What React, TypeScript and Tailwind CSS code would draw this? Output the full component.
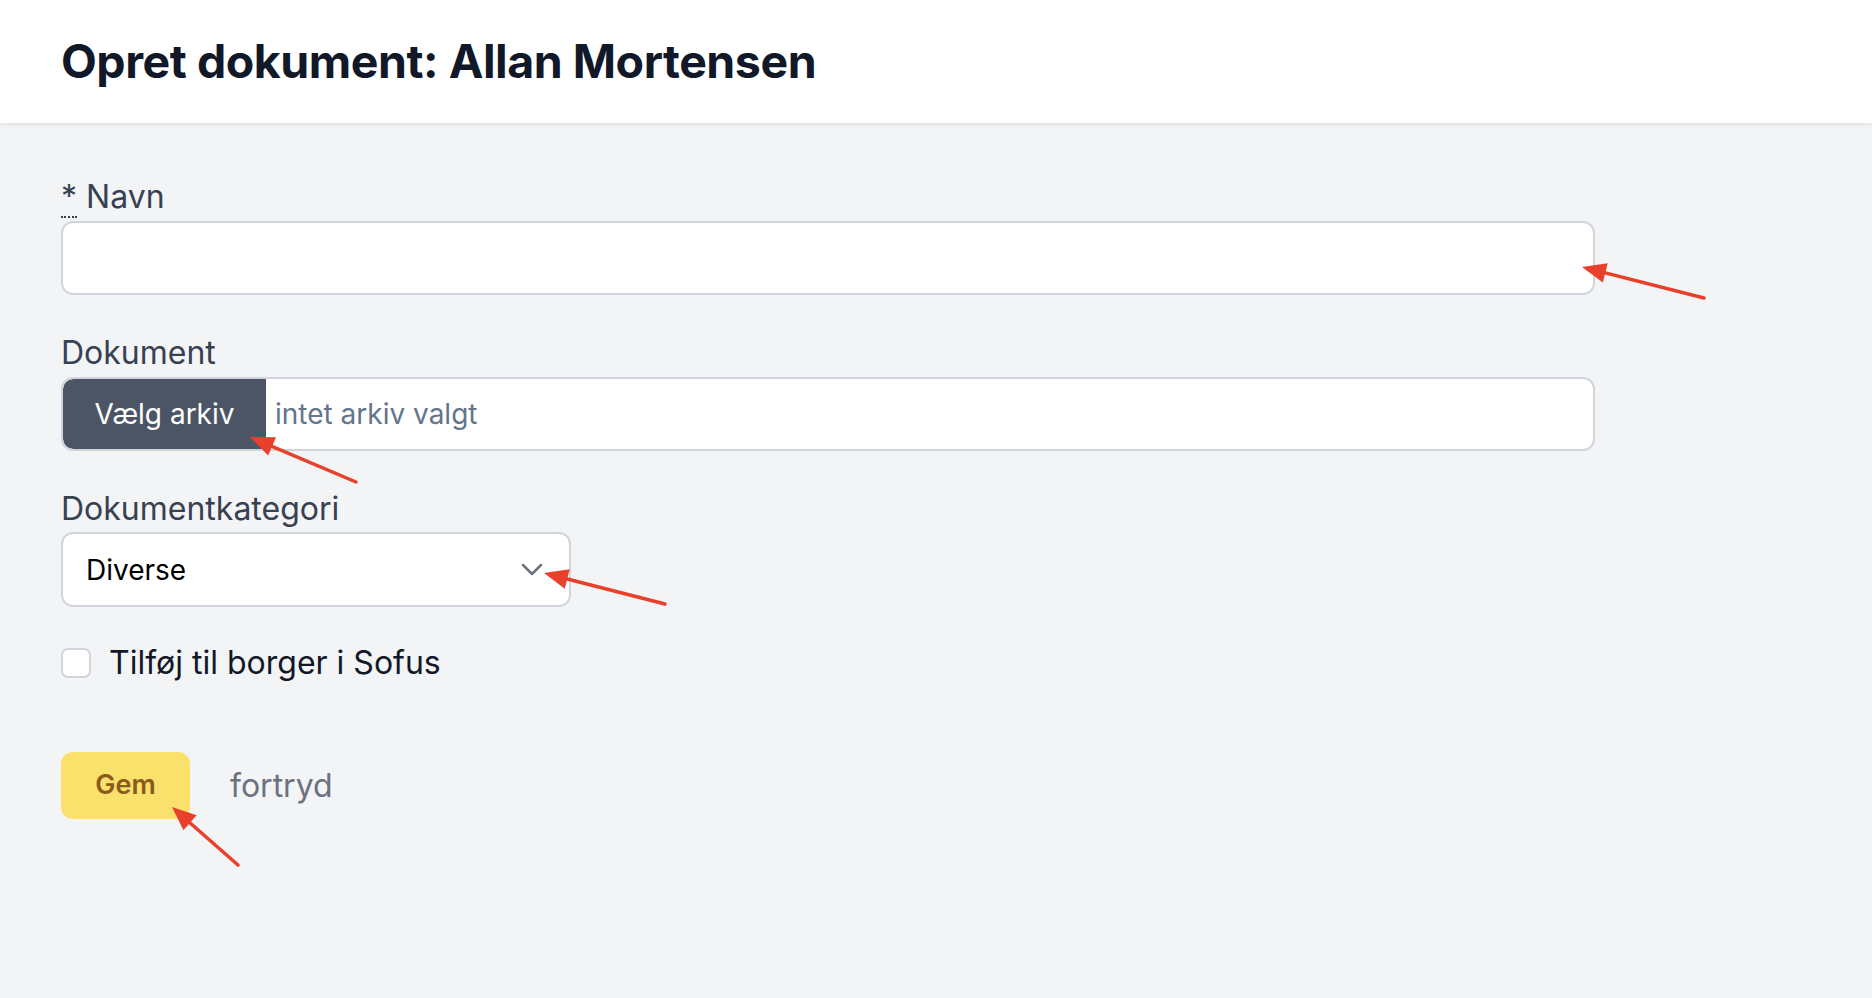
import React from "react"

const font = { fontFamily: "Inter, 'Noto Sans', sans-serif" }

// red annotation arrows drawn over the form
const arrows = [
  { from: [1704, 298], to: [1582, 267] },
  { from: [356, 482], to: [250, 437] },
  { from: [665, 604], to: [544, 573] },
  { from: [238, 865], to: [172, 807] },
]

function Arrow({ from, to }: { from: number[]; to: number[] }) {
  const dx = to[0] - from[0]
  const dy = to[1] - from[1]
  const len = Math.hypot(dx, dy)
  const ux = dx / len
  const uy = dy / len
  const L = 24
  const W = 10
  const bx = to[0] - ux * L
  const by = to[1] - uy * L
  const pts = `${to[0]},${to[1]} ${bx - uy * W},${by + ux * W} ${bx + uy * W},${by - ux * W}`
  return (
    <g>
      <line x1={from[0]} y1={from[1]} x2={bx + ux * 4} y2={by + uy * 4} stroke="#e8402a" strokeWidth={3.5} strokeLinecap="round" />
      <polygon points={pts} fill="#e8402a" />
    </g>
  )
}

export default function App() {
  return (
    <div className="relative min-h-[998px] bg-[#f3f4f6]" style={font}>
      {/* Header */}
      <header className="flex h-[123px] items-center bg-white px-[61px] shadow-[0_2px_4px_rgba(0,0,0,0.08)]">
        <h1 className="text-[46.5px] font-bold tracking-[-0.01em] text-[#111827]">Opret dokument: Allan Mortensen</h1>
      </header>

      {/* Form */}
      <main className="px-[61px] pt-[56px]">
        <div>
          <label className="mb-[6px] block text-[32px] leading-[36px] text-[#374151]">
            <abbr title="påkrævet" className="no-underline border-b-2 border-dotted border-[#374151]">*</abbr> Navn
          </label>
          <input className="block h-[74px] w-[1534px] rounded-[12px] border-2 border-[#d1d5db] bg-white px-5 text-[30px] outline-none" />
        </div>

        <div className="mt-10">
          <label className="mb-[6px] block text-[32px] leading-[36px] text-[#374151]">Dokument</label>
          <div className="flex h-[74px] w-[1534px] items-center overflow-hidden rounded-[12px] border-2 border-[#d1d5db] bg-white">
            <span className="flex h-full w-[203px] items-center justify-center rounded-l-[10px] bg-[#4b5565] text-[28px] text-white">Vælg arkiv</span>
            <span className="ml-[9px] text-[28px] text-[#64748b]">intet arkiv valgt</span>
          </div>
        </div>

        <div className="mt-10">
          <label className="mb-[5px] block text-[32px] leading-[36px] text-[#374151]">Dokumentkategori</label>
          <div className="flex h-[75px] w-[510px] items-center justify-between rounded-[12px] border-2 border-[#d1d5db] bg-white pl-[23px] pr-[26px]">
            <span className="text-[28px] text-black">Diverse</span>
            <svg width="22" height="14" viewBox="0 0 22 14" fill="none">
              <path d="M2 2l9 9 9-9" stroke="#6b7280" strokeWidth="2.5" strokeLinecap="round" strokeLinejoin="round" />
            </svg>
          </div>
        </div>

        <label className="mt-[38px] flex items-center gap-[18px]">
          <span className="block h-[30px] w-[30px] rounded-[7px] border-2 border-[#d1d5db] bg-white" />
          <span className="text-[32px] leading-[36px] text-[#111827]">Tilføj til borger i Sofus</span>
        </label>

        <div className="mt-[71px] flex items-center gap-[40px]">
          <button className="h-[67px] w-[129px] rounded-[12px] bg-[#f9e16b] text-[27px] font-semibold text-[#8a5a1c]">Gem</button>
          <span className="text-[32px] text-[#6b7280]">fortryd</span>
        </div>
      </main>

      <svg className="pointer-events-none absolute inset-0" width="1872" height="998">
        {arrows.map((a, i) => (
          <Arrow key={i} from={a.from} to={a.to} />
        ))}
      </svg>
    </div>
  )
}
